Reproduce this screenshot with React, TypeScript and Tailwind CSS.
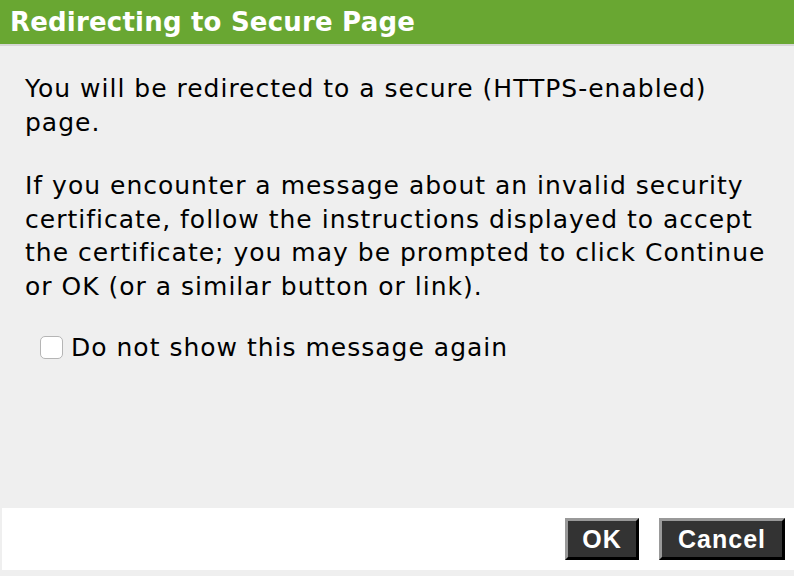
import React, { useState } from 'react';

const App: React.FC = () => {
    const [dontShow, setDontShow] = useState<boolean>(false);

    return (
        <div className="w-[794px] h-[576px] bg-[#efefef] flex flex-col" style={{ fontFamily: '"DejaVu Sans", Verdana, sans-serif' }}>
            <div className="h-[44px] bg-[#69a732] flex items-center pl-[10px] border-b-2 border-[#d6d6d6] box-content">
                <h1 className="text-white font-bold text-[26px] leading-none tracking-[0.2px]">Redirecting to Secure Page</h1>
            </div>
            <div className="flex-1 pl-[25px] pr-[18px] pt-[26px] text-[25px] leading-[33.5px] tracking-[1px] text-black">
                <p>You will be redirected to a secure (HTTPS-enabled) page.</p>
                <p className="mt-[30px]">
                    If you encounter a message about an invalid security certificate, follow the instructions displayed to accept the certificate; you may be prompted to click Continue or OK (or a similar button or link).
                </p>
                <label className="flex items-center mt-[28px] ml-[15px] gap-[8px] cursor-pointer">
                    <input
                        type="checkbox"
                        checked={dontShow}
                        onChange={e => setDontShow(e.target.checked)}
                        className="appearance-none w-[23px] h-[23px] rounded-[5px] border border-[#b5b5b5] bg-white shrink-0"
                    />
                    <span>Do not show this message again</span>
                </label>
            </div>
            <div className="h-[62px] bg-white ml-[2px] mb-[6px] flex items-center justify-end gap-[20px] pr-[9px]" style={{ fontFamily: '"Liberation Sans", Arial, sans-serif' }}>
                <button className="w-[74px] h-[42px] bg-[#333333] text-white font-bold text-[25px] tracking-[1px] border-[3px] border-t-[#999999] border-l-[#999999] border-b-black border-r-black">
                    OK
                </button>
                <button className="w-[126px] h-[42px] bg-[#333333] text-white font-bold text-[25px] tracking-[1px] border-[3px] border-t-[#999999] border-l-[#999999] border-b-black border-r-black">
                    Cancel
                </button>
            </div>
        </div>
    );
};

export default App;
